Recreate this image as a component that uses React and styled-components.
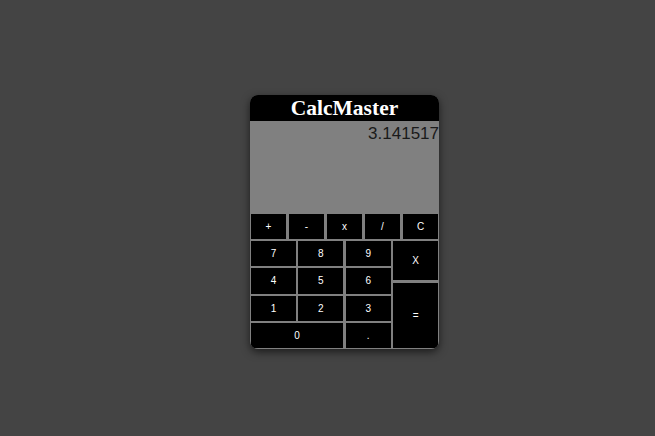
import styled, { createGlobalStyle } from "styled-components";

const GlobalStyle = createGlobalStyle`
	html, body {
		margin: 0;
		padding: 0;
		background: #444444;
		font-family: "Liberation Sans", Arial, sans-serif;
	}
`;

const Page = styled.div`
	width: 655px;
	height: 436px;
	box-sizing: border-box;
	padding: 95px 0 0 250px;
`;

const Card = styled.div`
	width: 189px;
	height: 254px;
	display: flex;
	flex-direction: column;
	background: #808080;
	border-radius: 8px;
	overflow: hidden;
	box-shadow: 0 3px 8px rgba(0, 0, 0, 0.6);
`;

const Header = styled.h1`
	margin: 0;
	height: 26px;
	background: #000;
	color: #fff;
	font-family: "Liberation Serif", "Times New Roman", serif;
	font-weight: bold;
	font-size: 21.5px;
	line-height: 26px;
	text-align: center;
`;

const Display = styled.div`
	height: 91px;
	background: #808080;
	color: #1a1a1a;
	font-size: 17px;
	line-height: 20px;
	padding-top: 3px;
	box-sizing: border-box;
	text-align: right;
`;

const Keypad = styled.div`
	flex: 1;
	display: flex;
	flex-direction: column;
	gap: 2px;
	padding: 2px 1px 1px 1px;
`;

const OpRow = styled.div`
	height: 25px;
	display: grid;
	grid-template-columns: repeat(5, 1fr);
	column-gap: 3px;
`;

const Grid = styled.div`
	flex: 1;
	display: grid;
	grid-template-columns: repeat(4, 1fr);
	grid-template-rows: repeat(4, 1fr);
	column-gap: 2.5px;
	row-gap: 2px;
`;

const Key = styled.button`
	margin: 0;
	padding: 0;
	border: none;
	background: #000;
	color: #fff;
	font-family: "Liberation Sans", Arial, sans-serif;
	font-size: 10px;
	cursor: pointer;
	grid-column: ${(p) => (p.$wide ? "span 2" : "auto")};
`;

const SideColumn = styled.div`
	grid-column: 4;
	grid-row: 1 / span 4;
	display: flex;
	flex-direction: column;
	gap: 3px;
`;

const SideKey = styled(Key)`
	flex: ${(p) => (p.$tall ? "1" : "0 0 39px")};
`;

const ops = ["+", "-", "x", "/", "C"];
const digits = [
	["7", "8", "9"],
	["4", "5", "6"],
	["1", "2", "3"],
];

export default function App() {
	return (
		<>
			<GlobalStyle />
			<Page>
				<Card>
					<Header>CalcMaster</Header>
					<Display>3.141517</Display>
					<Keypad>
						<OpRow>
							{ops.map((op) => (
								<Key key={op}>{op}</Key>
							))}
						</OpRow>
						<Grid>
							{digits.map((row, r) =>
								row.map((d, c) => (
									<Key key={d} style={{ gridRow: r + 1, gridColumn: c + 1 }}>
										{d}
									</Key>
								))
							)}
							<Key $wide style={{ gridRow: 4, gridColumn: "1 / span 2" }}>
								0
							</Key>
							<Key style={{ gridRow: 4, gridColumn: 3 }}>.</Key>
							<SideColumn>
								<SideKey>X</SideKey>
								<SideKey $tall>=</SideKey>
							</SideColumn>
						</Grid>
					</Keypad>
				</Card>
			</Page>
		</>
	);
}
